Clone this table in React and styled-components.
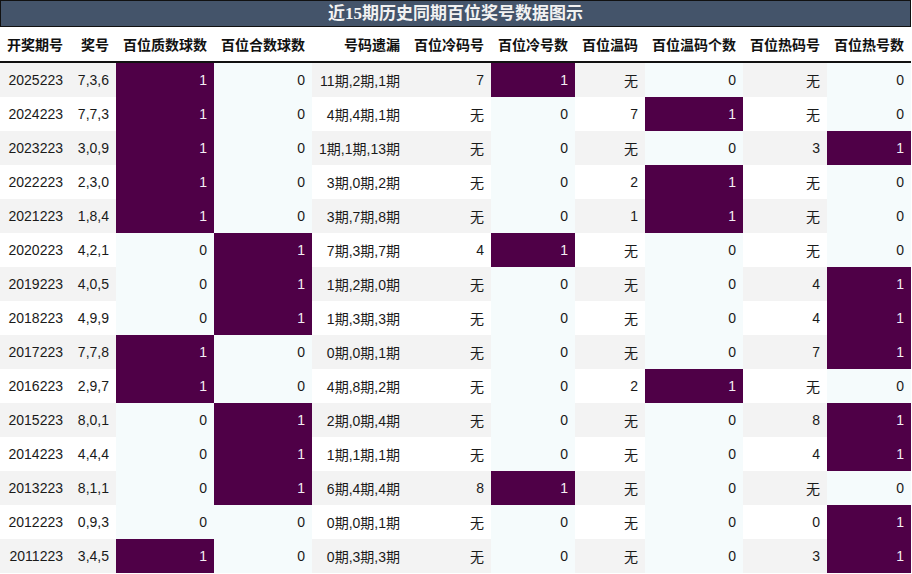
import styled, { createGlobalStyle } from 'styled-components'

const GlobalStyle = createGlobalStyle`
	body {
		margin: 0;
		background: #ffffff;
		font-family: "Liberation Sans", "Noto Sans CJK SC", sans-serif;
	}
`

const Wrapper = styled.div`
	width: 912px;
`

const Title = styled.div`
	box-sizing: border-box;
	width: 911px;
	height: 27px;
	border: 1px solid #111;
	background-color: #44546a;
	color: #f2f2f2;
	font-family: "Liberation Serif", "Noto Sans CJK SC", serif;
	font-weight: bold;
	font-size: 17px;
	line-height: 25px;
	text-align: center;
`

const Table = styled.table`
	width: 911px;
	border-collapse: separate;
	border-spacing: 0;
	table-layout: fixed;
	font-size: 14px;
	color: #1a1a1a;
`

const HeadCell = styled.th`
	height: 34px;
	padding: 0 7px;
	text-align: right;
	font-weight: bold;
	color: #111;
	background: #ffffff;
	border-bottom: 2px solid #111;
	white-space: nowrap;
	font-family: "Noto Sans CJK SC", sans-serif;
`

const Row = styled.tr`
	height: 34px;
	background-color: ${p => (p.$odd ? '#f3f3f3' : '#ffffff')};
`

const Cell = styled.td`
	height: 34px;
	padding: 0 7px;
	text-align: right;
	white-space: nowrap;
	background-color: ${p => (p.$hit ? '#4f0047' : p.$count ? '#f5fbfc' : 'transparent')};
	color: ${p => (p.$hit ? '#f4eef4' : '#1a1a1a')};
`

const widths = [70, 46, 98, 98, 95, 84, 84, 70, 98, 84, 84]

const headers = [
	'开奖期号',
	'奖号',
	'百位质数球数',
	'百位合数球数',
	'号码遗漏',
	'百位冷码号',
	'百位冷号数',
	'百位温码',
	'百位温码个数',
	'百位热码号',
	'百位热号数',
]

// columns that hold a 0/1 count and get highlighted
const countCols = [2, 3, 6, 8, 10]

const rows = [
	['2025223', '7,3,6', 1, 0, '11期,2期,1期', '7', 1, '无', 0, '无', 0],
	['2024223', '7,7,3', 1, 0, '4期,4期,1期', '无', 0, '7', 1, '无', 0],
	['2023223', '3,0,9', 1, 0, '1期,1期,13期', '无', 0, '无', 0, '3', 1],
	['2022223', '2,3,0', 1, 0, '3期,0期,2期', '无', 0, '2', 1, '无', 0],
	['2021223', '1,8,4', 1, 0, '3期,7期,8期', '无', 0, '1', 1, '无', 0],
	['2020223', '4,2,1', 0, 1, '7期,3期,7期', '4', 1, '无', 0, '无', 0],
	['2019223', '4,0,5', 0, 1, '1期,2期,0期', '无', 0, '无', 0, '4', 1],
	['2018223', '4,9,9', 0, 1, '1期,3期,3期', '无', 0, '无', 0, '4', 1],
	['2017223', '7,7,8', 1, 0, '0期,0期,1期', '无', 0, '无', 0, '7', 1],
	['2016223', '2,9,7', 1, 0, '4期,8期,2期', '无', 0, '2', 1, '无', 0],
	['2015223', '8,0,1', 0, 1, '2期,0期,4期', '无', 0, '无', 0, '8', 1],
	['2014223', '4,4,4', 0, 1, '1期,1期,1期', '无', 0, '无', 0, '4', 1],
	['2013223', '8,1,1', 0, 1, '6期,4期,4期', '8', 1, '无', 0, '无', 0],
	['2012223', '0,9,3', 0, 0, '0期,0期,1期', '无', 0, '无', 0, '0', 1],
	['2011223', '3,4,5', 1, 0, '0期,3期,3期', '无', 0, '无', 0, '3', 1],
]

export default function App() {
	return (
		<Wrapper>
			<GlobalStyle />
			<Title>近15期历史同期百位奖号数据图示</Title>
			<Table>
				<colgroup>
					{widths.map((w, i) => (
						<col key={i} style={{ width: w }} />
					))}
				</colgroup>
				<thead>
					<tr>
						{headers.map(h => (
							<HeadCell key={h}>{h}</HeadCell>
						))}
					</tr>
				</thead>
				<tbody>
					{rows.map((row, r) => (
						<Row key={row[0]} $odd={r % 2 === 0}>
							{row.map((val, c) => {
								const isCount = countCols.includes(c)
								return (
									<Cell key={c} $count={isCount} $hit={isCount && val === 1}>
										{val}
									</Cell>
								)
							})}
						</Row>
					))}
				</tbody>
			</Table>
		</Wrapper>
	)
}
